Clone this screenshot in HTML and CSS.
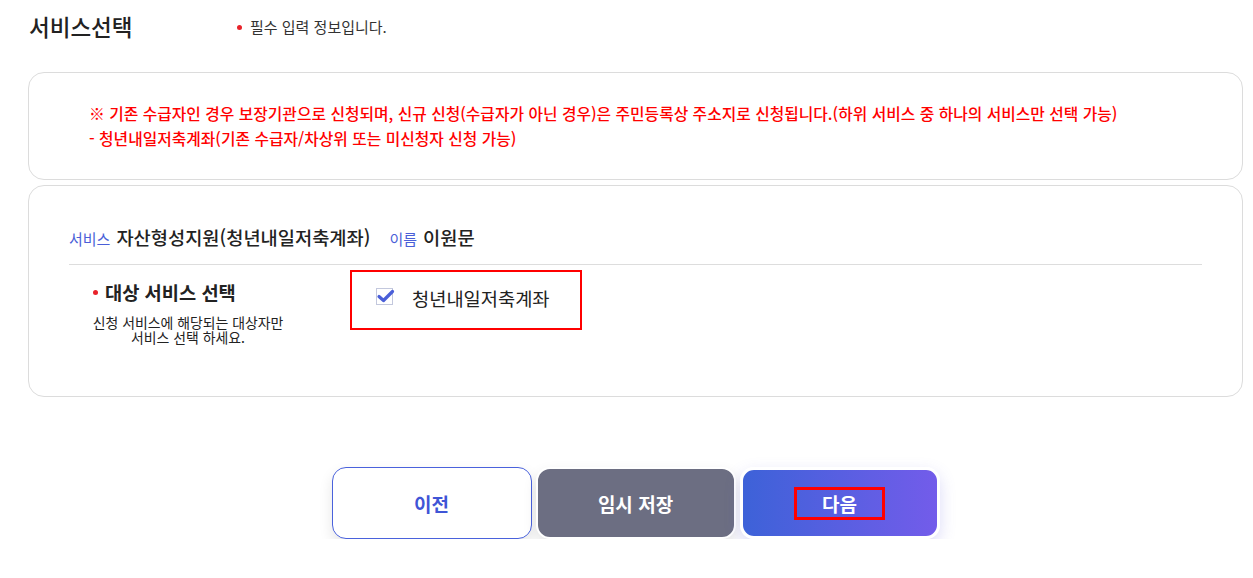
FILE: index.html
```html
<!DOCTYPE html>
<html lang="ko">
<head>
<meta charset="utf-8">
<title>서비스선택</title>
<link rel="stylesheet" href="styles.css">
</head>
<body>
<div class="page">
  <div class="head">
    <h2 class="title">서비스선택</h2>
    <p class="req"><span class="dot"></span>필수 입력 정보입니다.</p>
  </div>

  <div class="box notice">
    <p>※ 기존 수급자인 경우 보장기관으로 신청되며, 신규 신청(수급자가 아닌 경우)은 주민등록상 주소지로 신청됩니다.(하위 서비스 중 하나의 서비스만 선택 가능)</p>
    <p>- 청년내일저축계좌(기존 수급자/차상위 또는 미신청자 신청 가능)</p>
  </div>

  <div class="box form">
    <div class="info">
      <span class="lbl">서비스</span><span class="val">자산형성지원(청년내일저축계좌)</span>
      <span class="lbl lbl2">이름</span><span class="val">이원문</span>
    </div>
    <div class="sel-row">
      <div class="sel-left">
        <div class="sel-title"><span class="dot"></span>대상 서비스 선택</div>
        <div class="sel-desc">
          <span class="ln">신청 서비스에 해당되는 대상자만</span>
          <span class="ln">서비스 선택 하세요.</span>
        </div>
      </div>
      <div class="sel-opts">
        <label class="chk">
          <span class="chk-box">
            <svg width="20" height="16" viewBox="0 0 20 16"><path d="M3 8.5 L7.5 12.5 L16.5 3.5" fill="none" stroke="#4a5fd8" stroke-width="3.2" stroke-linecap="round" stroke-linejoin="round"/></svg>
          </span>
          <span class="chk-txt">청년내일저축계좌</span>
        </label>
      </div>
    </div>
  </div>

  <div class="btns">
    <button class="btn prev">이전</button>
    <button class="btn save">임시 저장</button>
    <button class="btn next"><span class="mark">다음</span></button>
  </div>
</div>
</body>
</html>
```

FILE: styles.css
```css
* { box-sizing: border-box; }
html, body { margin: 0; padding: 0; background: #fff; }
body {
  font-family: "Noto Sans CJK KR", "Noto Sans", sans-serif;
  color: #222;
}
.page {
  width: 1215px;
  margin-left: 28px;
}
.head {
  display: flex;
  align-items: center;
  padding-top: 10px;
  height: 42px;
  margin-bottom: 30px;
}
.title {
  margin: 0;
  width: 209px;
  padding-left: 1px;
  font-size: 22.5px;
  line-height: 32px;
  font-weight: 500;
  color: #222;
}
.req {
  margin: 0;
  display: flex;
  align-items: center;
  font-size: 15px;
  line-height: 20px;
  color: #333;
  padding-top: 2px;
}
.dot {
  display: inline-block;
  width: 5px;
  height: 5px;
  border-radius: 50%;
  background: #e8222a;
  margin-right: 8px;
}
.box {
  border: 1px solid #dcdcdc;
  border-radius: 16px;
  background: #fff;
}
.notice {
  padding: 28px 60px 28px;
}
.notice p {
  margin: 0;
  font-size: 15.8px;
  line-height: 25px;
  font-weight: 500;
  color: #ff0000;
}
.form {
  margin-top: 5px;
  padding: 37px 40px 51px;
}
.info {
  display: flex;
  align-items: baseline;
  height: 42px;
  line-height: 28px;
  padding-bottom: 13px;
  border-bottom: 1px solid #dddddd;
  overflow: hidden;
}
.lbl {
  font-size: 15px;
  color: #4a5fd8;
  margin-right: 6px;
}
.lbl2 { margin-left: 19px; }
.val {
  font-size: 18.7px;
  font-weight: 500;
  color: #222;
}
.sel-row {
  display: flex;
  align-items: flex-start;
}
.sel-left {
  width: 281px;
  padding-top: 14px;
}
.sel-title {
  display: flex;
  align-items: center;
  padding-left: 24px;
  font-size: 18.7px;
  line-height: 26px;
  font-weight: 700;
  color: #222;
}
.sel-title .dot { margin-right: 7px; }
.sel-desc {
  margin-top: 10px;
  width: 238px;
  text-align: center;
  font-size: 13.9px;
  line-height: 15px;
  color: #222;
}
.sel-desc .ln {
  display: block;
  height: 15px;
}
.sel-opts {
  margin-top: 5px;
  border: 2px solid #ff0000;
  width: 232px;
  height: 60px;
  padding: 12px 20px 0 24px;
}
.chk {
  display: flex;
  align-items: center;
  height: 26px;
}
.chk-box {
  position: relative;
  width: 17px;
  height: 17px;
  border: 1px solid #c3c8dd;
  background: #fff;
  margin-right: 19px;
  margin-top: -2px;
  flex: none;
}
.chk-box svg {
  position: absolute;
  left: -1px;
  top: -1px;
}
.chk-txt {
  font-size: 18.7px;
  line-height: 26px;
  color: #222;
  padding-top: 1px;
}
.btns {
  display: flex;
  justify-content: center;
  gap: 4px;
  margin-top: 70px;
}
.btn {
  width: 200px;
  height: 72px;
  border-radius: 14px;
  font-family: "Noto Sans CJK KR", "Noto Sans", sans-serif;
  font-size: 19px;
  font-weight: 700;
  cursor: pointer;
  display: flex;
  align-items: center;
  justify-content: center;
}
.prev {
  background: #fff;
  border: 1px solid #4a62dc;
  color: #3f55d6;
  box-shadow: 0 6px 14px rgba(0, 0, 0, 0.10);
}
.save {
  background: #6c6e82;
  border: 2px solid #fff;
  color: #fff;
  box-shadow: 0 6px 14px rgba(0, 0, 0, 0.10);
}
.next {
  background: linear-gradient(90deg, #3d62d8 0%, #735cea 100%);
  border: 3px solid #fff;
  color: #fff;
  box-shadow: 0 6px 16px rgba(95, 90, 225, 0.22);
}
.mark {
  display: inline-block;
  border: 3px solid #ff0000;
  padding: 0 25px;
  line-height: 27px;
}
```
